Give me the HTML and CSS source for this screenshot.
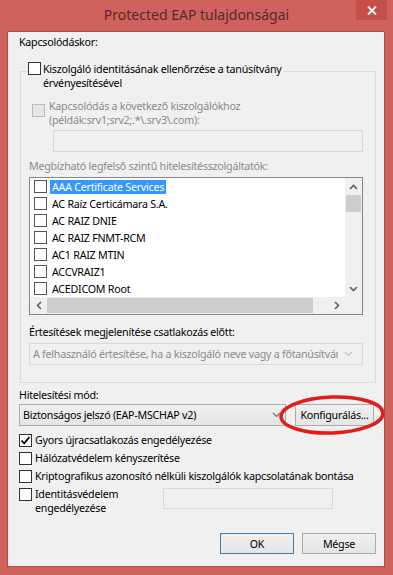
FILE: index.html
```html
<!DOCTYPE html>
<html lang="hu">
<head>
    <meta charset="UTF-8">
    <title>Protected EAP tulajdonságai</title>
    <link rel="stylesheet" href="styles.css">
</head>
<body>
<div class="window">
    <div class="titlebar">
        <span class="title">Protected EAP tulajdonságai</span>
        <span class="close">
            <svg width="10" height="9" viewBox="0 0 10 9"><path d="M1 0.5 L9 8.5 M9 0.5 L1 8.5" stroke="#fff" stroke-width="1.8"/></svg>
        </span>
    </div>
    <div class="client">
        <div class="label">Kapcsolódáskor:</div>

        <div class="group">
            <div class="group-head">
                <span class="cb"></span>
                <span>Kiszolgáló identitásának ellenőrzése a tanúsítvány<br>érvényesítésével</span>
            </div>
            <div class="opt disabled">
                <span class="cb"></span>
                <span>Kapcsolódás a következő kiszolgálókhoz<br>(példák:srv1;srv2;.*\.srv3\.com):</span>
            </div>
            <div class="field servers"></div>
            <div class="label disabled gap7">Megbízható legfelső szintű hitelesítésszolgáltatók:</div>

            <div class="list">
                <div class="list-main">
                    <div class="rows">
                        <div class="row"><span class="cb"></span><span class="name selected">AAA Certificate Services</span></div>
                        <div class="row"><span class="cb"></span><span class="name">AC Raíz Certicámara S.A.</span></div>
                        <div class="row"><span class="cb"></span><span class="name">AC RAIZ DNIE</span></div>
                        <div class="row"><span class="cb"></span><span class="name">AC RAIZ FNMT-RCM</span></div>
                        <div class="row"><span class="cb"></span><span class="name">AC1 RAIZ MTIN</span></div>
                        <div class="row"><span class="cb"></span><span class="name">ACCVRAIZ1</span></div>
                        <div class="row"><span class="cb"></span><span class="name">ACEDICOM Root</span></div>
                    </div>
                    <div class="vscroll">
                        <span class="arrow"><svg width="9" height="6" viewBox="0 0 9 6"><path d="M1 5 L4.5 1.5 L8 5" fill="none" stroke="#606060" stroke-width="1.6"/></svg></span>
                        <span class="vthumb"></span>
                        <span class="vtrack"></span>
                        <span class="arrow"><svg width="9" height="6" viewBox="0 0 9 6"><path d="M1 1 L4.5 4.5 L8 1" fill="none" stroke="#606060" stroke-width="1.6"/></svg></span>
                    </div>
                </div>
                <div class="hscroll">
                    <span class="arrow"><svg width="6" height="9" viewBox="0 0 6 9"><path d="M5 1 L1.5 4.5 L5 8" fill="none" stroke="#606060" stroke-width="1.6"/></svg></span>
                    <span class="hthumb"></span>
                    <span class="htrack"></span>
                    <span class="arrow"><svg width="6" height="9" viewBox="0 0 6 9"><path d="M1 1 L4.5 4.5 L1 8" fill="none" stroke="#606060" stroke-width="1.6"/></svg></span>
                    <span class="corner"></span>
                </div>
            </div>

            <div class="label gap10">Értesítések megjelenítése csatlakozás előtt:</div>
            <div class="combo off">
                <span class="combo-text">A felhasználó értesítése, ha a kiszolgáló neve vagy a főtanúsítvány nem meghatározott</span>
                <svg width="9" height="6" viewBox="0 0 9 6"><path d="M1 1 L4.5 4.5 L8 1" fill="none" stroke="#c4c4c4" stroke-width="1.2"/></svg>
            </div>
        </div>

        <div class="label gap5">Hitelesítési mód:</div>
        <div class="method">
            <div class="combo on">
                <span class="combo-text">Biztonságos jelszó (EAP-MSCHAP v2)</span>
                <svg width="9" height="6" viewBox="0 0 9 6"><path d="M1 1 L4.5 4.5 L8 1" fill="none" stroke="#707070" stroke-width="1.2"/></svg>
            </div>
            <button class="btn config">Konfigurálás...</button>
            <svg class="ring" width="110" height="44" viewBox="0 0 110 44">
                <ellipse cx="55" cy="22" rx="51" ry="18" fill="none" stroke="#e21b1b" stroke-width="3.5" transform="rotate(-2 55 22)"/>
            </svg>
        </div>

        <div class="checks">
            <div class="check">
                <span class="cb">
                    <svg width="11" height="11" viewBox="0 0 11 11"><path d="M1.5 5.5 L4.2 8.3 L9.5 2" fill="none" stroke="#000" stroke-width="1.8"/></svg>
                </span>
                <span>Gyors újracsatlakozás engedélyezése</span>
            </div>
            <div class="check"><span class="cb"></span><span>Hálózatvédelem kényszerítése</span></div>
            <div class="check"><span class="cb"></span><span>Kriptografikus azonosító nélküli kiszolgálók kapcsolatának bontása</span></div>
            <div class="check identity">
                <span class="cb"></span>
                <span class="id-text">Identitásvédelem<br>engedélyezése</span>
                <div class="field idfield"></div>
            </div>
        </div>

        <div class="footer">
            <button class="btn default">OK</button>
            <button class="btn">Mégse</button>
        </div>
    </div>
</div>
</body>
</html>
```

FILE: styles.css
```css
body{
    margin: 0;
    font-family: "Noto Sans", sans-serif;
    font-size: 10.7px;
    letter-spacing: -0.25px;
}
.window{
    position: relative;
    width: 393px;
    height: 575px;
    background: #cf625c;
    overflow: hidden;
}
.titlebar{
    height: 31px;
    display: flex;
    justify-content: center;
    align-items: center;
}
.title{
    font-size: 14px;
    letter-spacing: 0;
    color: #5a2826;
    margin-top: -3px;
}
.close{
    position: absolute;
    top: 0;
    right: 6px;
    width: 31px;
    height: 20px;
    background: #c74f4a;
    display: flex;
    align-items: center;
    justify-content: center;
}
.client{
    margin: 0 8px 0 7px;
    height: 536px;
    box-sizing: border-box;
    border: 1px solid #b04d48;
    background: #f0f0f0;
    padding: 3px 8px 12px 11px;
    line-height: 14px;
    color: #000;
    display: flex;
    flex-direction: column;
}
.label{
    white-space: nowrap;
}
.disabled{
    color: #8b8b8b;
}
.gap5{margin-top: 5px;}
.gap7{margin-top: 7px;}
.gap10{margin-top: 10px;}

.cb{
    flex: none;
    width: 11px;
    height: 11px;
    border: 1px solid #333;
    background: #fff;
    display: flex;
    align-items: center;
    justify-content: center;
}

/* group box */
.group{
    margin: 22px 0 0 1px;
    border: 1px solid #dcdcdc;
    padding: 0 12px 17px 8px;
}
.group-head{
    display: flex;
    width: max-content;
    gap: 2px;
    margin: -10px 0 0 -1px;
    padding-right: 2px;
    background: #f0f0f0;
    white-space: nowrap;
}
.opt{
    display: flex;
    gap: 4px;
    margin: 9px 0 0 3px;
    white-space: nowrap;
}
.opt .cb{
    margin-top: 5px;
    border-color: #bcbcbc;
    background: #e6e6e6;
}
.field{
    height: 22px;
    box-sizing: border-box;
    border: 1px solid #d9d9d9;
    background: #f0f0f0;
}
.servers{
    margin: 3px 0 0 24px;
}

/* certificate list */
.list{
    margin-top: 4px;
    border: 1px solid #828790;
    background: #fff;
}
.list-main{
    display: flex;
}
.rows{
    flex: 1;
    height: 119px;
}
.row{
    height: 17px;
    display: flex;
    align-items: center;
    padding-left: 4px;
    white-space: nowrap;
}
.row .cb{
    border-color: #555;
    margin-right: 3px;
}
.name{
    padding: 0 2px;
    line-height: 14px;
}
.selected{
    background: #3399ff;
    color: #fff;
}
.vscroll{
    width: 17px;
    height: 119px;
    background: #f0f0f0;
    display: flex;
    flex-direction: column;
}
.vscroll .arrow{
    height: 17px;
    display: flex;
    align-items: center;
    justify-content: center;
}
.vthumb{
    height: 17px;
    margin: 0 1px;
    background: #cdcdcd;
}
.vtrack{flex: 1;}
.hscroll{
    height: 17px;
    display: flex;
    background: #f0f0f0;
}
.hscroll .arrow{
    width: 17px;
    display: flex;
    align-items: center;
    justify-content: center;
}
.hthumb{
    width: 266px;
    margin: 1px 0;
    background: #cdcdcd;
}
.htrack{flex: 1;}
.corner{
    width: 17px;
}

/* combos */
.combo{
    height: 22px;
    box-sizing: border-box;
    display: flex;
    align-items: center;
    padding: 0 4px 0 3px;
    gap: 6px;
}
.combo-text{
    flex: 1;
    overflow: hidden;
    white-space: nowrap;
    line-height: 16px;
}
.combo.off{
    margin-top: 4px;
    padding-right: 9px;
    border: 1px solid #d9d9d9;
    color: #8b8b8b;
}
.combo.on{
    flex: 1;
    border: 1px solid #acacac;
    background: linear-gradient(#f0f0f0, #e5e5e5);
}

.method{
    position: relative;
    display: flex;
    gap: 9px;
    margin-top: 2px;
    padding-right: 2px;
}
.btn{
    font-family: inherit;
    font-size: 10.7px;
    letter-spacing: -0.25px;
    color: #000;
    border: 1px solid #acacac;
    background: linear-gradient(#f0f0f0, #e5e5e5);
    padding: 0;
    height: 22px;
}
.config{
    width: 79px;
}
.ring{
    position: absolute;
    left: 258px;
    top: -11px;
}

/* checkboxes */
.checks{
    margin-top: 7px;
}
.check{
    display: flex;
    gap: 3px;
    margin-bottom: 4px;
    white-space: nowrap;
}
.check .cb{
    margin-top: 1px;
}
.identity{
    align-items: flex-start;
}
.id-text{
    width: 125px;
}
.idfield{
    width: 170px;
    height: 21px;
    margin-top: 1px;
}

.footer{
    margin-top: auto;
    display: flex;
    justify-content: flex-end;
    gap: 8px;
}
.footer .btn{
    width: 74px;
    height: 21px;
}
.default{
    border-color: #3c7fb1;
}
```
